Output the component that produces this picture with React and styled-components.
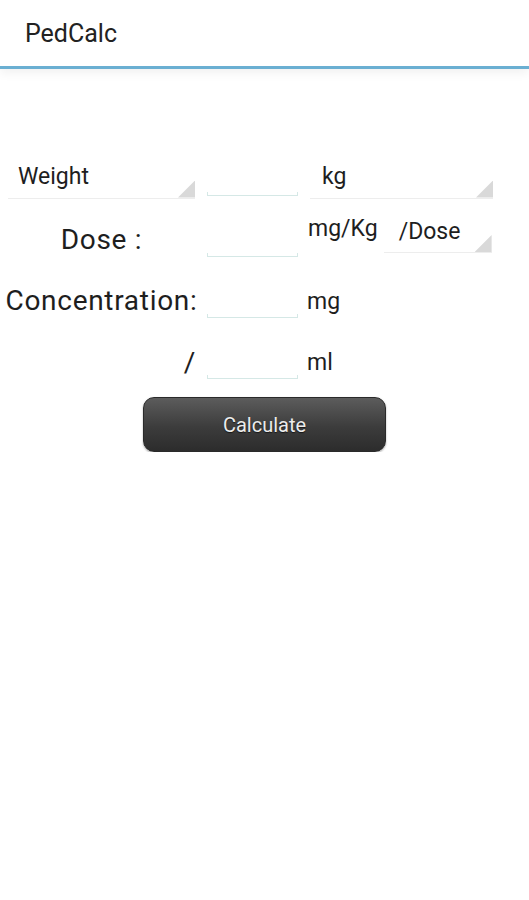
import styled, { createGlobalStyle } from "styled-components";

const Global = createGlobalStyle`
  body {
    margin: 0;
    background: #fff;
    font-family: Roboto, "Noto Sans", sans-serif;
    color: #1e1e1e;
  }
`;

const Header = styled.div`
  height: 66px;
  display: flex;
  align-items: center;
  padding-left: 25px;
  font-size: 25px;
  color: #222;
  border-bottom: 3px solid #6aafd2;
  box-shadow: 0 4px 10px rgba(0, 0, 0, 0.06);
`;

const Content = styled.div`
  padding-top: 89px;
`;

const Form = styled.div`
  display: grid;
  grid-template-columns: 203px 91px 1fr;
  grid-auto-rows: 40px;
  column-gap: 4px;
  row-gap: 21px;
`;

const Label = styled.div`
  display: flex;
  align-items: center;
  justify-content: ${(p) => (p.$right ? "flex-end" : "center")};
  padding-right: ${(p) => (p.$right ? "7px" : "0")};
  padding-top: ${(p) => (p.$right ? "2px" : "0")};
  font-size: 28px;
  letter-spacing: 0.7px;
  white-space: nowrap;
`;

const Cell = styled.div`
  display: flex;
  align-items: ${(p) => (p.$top ? "flex-start" : "center")};
  padding-top: ${(p) => (p.$top ? "0" : "2px")};
  margin-top: ${(p) => (p.$top ? "-4px" : "0")};
`;

const Spinner = styled.div`
  position: relative;
  box-sizing: border-box;
  height: ${(p) => p.$h || 39}px;
  width: ${(p) => p.$w}px;
  margin-left: ${(p) => p.$ml || 0}px;
  padding-left: ${(p) => p.$pl || 10}px;
  padding-bottom: 5px;
  display: flex;
  align-items: center;
  font-size: 23px;
  border-bottom: 1px solid #ededed;

  &::after {
    content: "";
    position: absolute;
    right: 0;
    bottom: 0;
    width: 17px;
    height: 17px;
    background: #d9d9d9;
    clip-path: polygon(100% 0, 100% 100%, 0 100%);
  }
`;

const Edit = styled.div`
  position: relative;
  height: 40px;

  &::after {
    content: "";
    position: absolute;
    left: 0;
    right: 0;
    bottom: 2px;
    height: 3px;
    border: 1px solid #d5e8e6;
    border-top: none;
  }
`;

const Unit = styled.span`
  font-size: 23px;
  padding-left: ${(p) => p.$pl || 5}px;
`;

const ButtonRow = styled.div`
  display: flex;
  justify-content: center;
  margin-top: 16px;
`;

const Button = styled.button`
  width: 243px;
  height: 55px;
  border-radius: 11px;
  border: 1px solid #2a2a2a;
  background: linear-gradient(#5c5c5c, #3c3c3c 55%, #2c2c2c);
  color: #ececec;
  font-family: Roboto, sans-serif;
  font-size: 20px;
  text-shadow: 0 1px 1px rgba(0, 0, 0, 0.6);
  box-shadow: 0 1px 2px rgba(0, 0, 0, 0.35);
  padding: 0;
`;

export default function App() {
  return (
    <>
      <Global />
      <Header>PedCalc</Header>
      <Content>
        <Form>
          <Cell>
            <Spinner $w={187} $ml={8}>Weight</Spinner>
          </Cell>
          <Edit />
          <Cell>
            <Spinner $w={183} $ml={8} $pl={12}>kg</Spinner>
          </Cell>

          <Label>Dose :</Label>
          <Edit />
          <Cell $top>
            <Unit $pl={6}>mg/Kg</Unit>
            <Spinner $w={108} $ml={6} $pl={15} $h={38}>/Dose</Spinner>
          </Cell>

          <Label>Concentration:</Label>
          <Edit />
          <Cell>
            <Unit>mg</Unit>
          </Cell>

          <Label $right>/</Label>
          <Edit />
          <Cell>
            <Unit>ml</Unit>
          </Cell>
        </Form>
        <ButtonRow>
          <Button>Calculate</Button>
        </ButtonRow>
      </Content>
    </>
  );
}
